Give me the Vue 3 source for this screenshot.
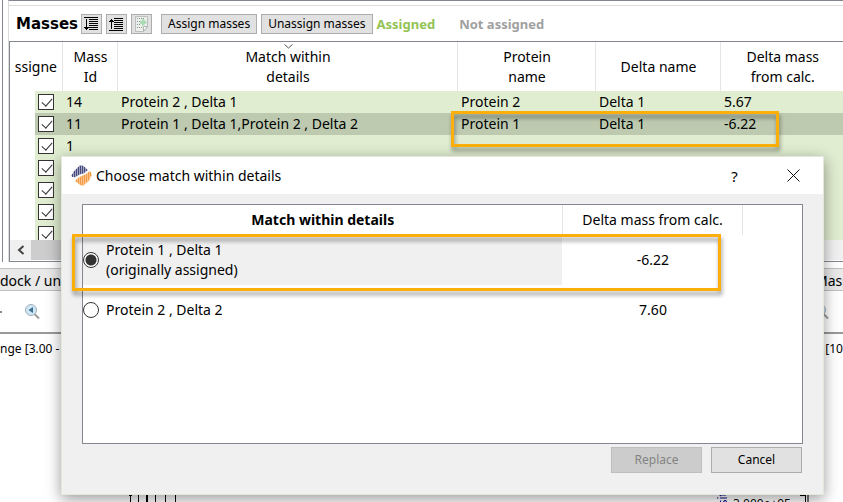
<script setup>
import { ref } from 'vue'

const rows = ref([
  { id: '14', match: 'Protein 2 , Delta 1', protein: 'Protein 2', delta: 'Delta 1', mass: '5.67', on: true },
  { id: '11', match: 'Protein 1 , Delta 1,Protein 2 , Delta 2', protein: 'Protein 1', delta: 'Delta 1', mass: '-6.22', on: true, selected: true },
  { id: '1', on: true },
  { id: '', on: true },
  { id: '', on: true },
  { id: '', on: true },
  { id: '', on: true },
])
const choice = ref('a')
</script>

<template>
  <div class="app">
    <div class="top">
      <div class="side"></div>
      <section class="panel">
        <header class="toolbar">
          <h1>Masses</h1>
          <button class="tool" aria-label="Sort descending">
            <svg width="19" height="18" viewBox="0 0 19 18" fill="none" stroke="#000" shape-rendering="crispEdges">
              <path d="M2 2.500h14M7 4.500h9M7 6.500h9M7 8.500h9M7 10.500h9M7 12.500h9M7 14.500h9M4.500 4v11" />
              <path d="M2 12.500h5M3 13.500h3M4 14.500h1" />
            </svg>
          </button>
          <button class="tool" aria-label="Sort ascending">
            <svg width="19" height="18" viewBox="0 0 19 18" fill="none" stroke="#000" shape-rendering="crispEdges">
              <path d="M2 15.500h14M7 13.500h9M7 11.500h9M7 9.500h9M7 7.500h9M7 5.500h9M7 3.500h9M4.500 4v10" />
              <path d="M2 6.500h5M3 5.500h3M4 4.500h1" />
            </svg>
          </button>
          <button class="tool" aria-label="Export table">
            <svg width="19" height="18" viewBox="0 0 19 18">
              <path d="M3.500 1.500h12v10l-4 5h-8z" fill="#eceeec" stroke="#bcc0bc" />
              <path d="M5 3.500h8M5 6.500h3M5 9.500h3M5 12.500h5" stroke="#8a9c8e" stroke-dasharray="1 1" />
              <path d="M8 6h2V3l5 4.500-5 4V9H8z" fill="#a9dcb4" />
              <path d="M15.500 11.500h-4v5z" fill="#fff" stroke="#b0b4b0" />
            </svg>
          </button>
          <button class="btn first">Assign masses</button>
          <button class="btn">Unassign masses</button>
          <span class="legend yes">Assigned</span>
          <span class="legend no">Not assigned</span>
        </header>
        <div class="grid">
          <table class="masses">
            <colgroup><col class="c0" /><col class="c1" /><col class="c2" /><col class="c3" /><col class="c4" /><col class="c5" /></colgroup>
            <thead>
              <tr>
                <th><div class="clip"><span>Assigned</span></div></th>
                <th>Mass<br />Id</th>
                <th class="sorted">
                  <svg class="caret" width="9" height="5" viewBox="0 0 9 5" fill="none" stroke="#555"><path d="M.5.500l4 3.500 4-3.500" /></svg>
                  Match within<br />details
                </th>
                <th>Protein<br />name</th>
                <th>Delta name</th>
                <th>Delta mass<br />from calc.</th>
              </tr>
            </thead>
            <tbody>
              <tr v-for="(r, i) in rows" :key="i" :class="{ selected: r.selected }">
                <td class="pick"><div><input v-model="r.on" type="checkbox" :aria-label="'Assigned, row ' + (i + 1)" /></div></td>
                <td>{{ r.id }}</td>
                <td>{{ r.match }}</td>
                <td>{{ r.protein }}</td>
                <td>{{ r.delta }}</td>
                <td>{{ r.mass }}</td>
              </tr>
            </tbody>
          </table>
          <div class="scroll">
            <button aria-label="Scroll left">
              <svg width="8" height="10" viewBox="0 0 8 10" fill="none" stroke="#444" stroke-width="2"><path d="M6.500 1L2 5l4.500 4" /></svg>
            </button>
            <div class="thumb"></div>
          </div>
        </div>
      </section>
    </div>

    <div class="dock"><span>dock / undock</span><span class="dock-right">Mass</span></div>
    <div class="tools">
      <span class="dot"></span>
      <svg class="lens" width="17" height="17" viewBox="0 0 17 17">
        <path d="M10.500 11l4.500 4.500" stroke="#9a9a9a" stroke-width="2" />
        <circle cx="7" cy="7" r="5.500" fill="#cfe6f5" stroke="#9fb0bd" />
        <path d="M9 4v6L4.500 7z" fill="#3f6c91" />
      </svg>
      <svg class="lens right" width="17" height="17" viewBox="0 0 17 17">
        <path d="M10.500 11l4.500 4.500" stroke="#9a9a9a" stroke-width="2" />
        <circle cx="7" cy="7" r="5.500" fill="#cfe6f5" stroke="#9fb0bd" />
      </svg>
    </div>
    <div class="range"><span>nge [3.00 -</span><span>[10</span></div>
    <div class="plots">
      <svg width="50" height="19" viewBox="0 0 50 19" stroke="#000" shape-rendering="crispEdges">
        <path d="M0 12.500h3M1.500 12v7M9.500 12v7M26.500 12v7M36.500 12v7M46.500 12v7" />
        <path d="M18 12v7" stroke-width="2" />
      </svg>
      <div class="axis">
        <span class="axis-name">Intensity</span>
        <span class="tick">3.000e+05</span>
        <svg width="9" height="19" viewBox="0 0 9 19" shape-rendering="crispEdges">
          <path d="M0 12.500h6M5.500 12v7" stroke="#000" />
          <path d="M7.500 12v7" stroke="#777" stroke-width="2" />
        </svg>
      </div>
    </div>

    <div class="mark mark-row"></div>

    <div class="dialog" role="dialog" aria-labelledby="dialog-title">
      <div class="title">
        <svg width="21" height="21" viewBox="0 0 21 21" fill="none">
          <path d="M0 11l3-5 6-6 3 .5L17 5l-4 3.500-4 1-5 3z" fill="#a3a5c0" />
          <path d="M4 16l4-4 7-3 4-3 2 4-3 6-6 5-3-1z" fill="#fbc48c" />
          <path d="M1.500 9v3M3.500 6v6M5.500 4v7M7.500 2v8M9.500 1v8M11.500 1v7.500M13.500 2v5.500M15.500 4v2" stroke="#454b7c" />
          <path d="M5.500 14.500v2.500M7.500 13v5.500M9.500 12v8M11.500 11v9M13.500 10v8.500M15.500 9v8M17.500 7v8M19.500 7v4" stroke="#f49a42" />
        </svg>
        <h2 id="dialog-title">Choose match within details</h2>
        <button class="win" aria-label="Help">?</button>
        <button class="win" aria-label="Close">
          <svg width="13" height="13" viewBox="0 0 13 13" stroke="#111"><path d="M.5.500l12 12M12.500.500l-12 12" /></svg>
        </button>
      </div>
      <div class="body">
        <div class="list">
          <table class="options">
            <colgroup><col /><col class="o1" /><col class="o2" /></colgroup>
            <thead>
              <tr><th class="bold">Match within details</th><th>Delta mass from calc.</th><th></th></tr>
            </thead>
            <tbody>
              <tr>
                <td class="shade"><label><input v-model="choice" type="radio" name="match" value="a" /><span>Protein 1 , Delta 1<br />(originally assigned)</span></label></td>
                <td class="num">-6.22</td><td></td>
              </tr>
              <tr>
                <td><label><input v-model="choice" type="radio" name="match" value="b" /><span>Protein 2 , Delta 2</span></label></td>
                <td class="num">7.60</td><td></td>
              </tr>
            </tbody>
          </table>
          <div class="mark mark-choice"></div>
        </div>
        <div class="actions">
          <button class="btn" disabled>Replace</button>
          <button class="btn">Cancel</button>
        </div>
      </div>
    </div>
  </div>
</template>

<style>
body { margin: 0; background: #fff; }
</style>

<style scoped>
* { box-sizing: border-box; }
.app { position: relative; height: 100vh; overflow: hidden; display: flex; flex-direction: column; font-family: "Noto Sans", sans-serif; font-size: 14px; line-height: 20px; color: #000; background: #fff; }
button { font-family: inherit; color: #000; }
.top { display: flex; }
.side { width: 3px; height: 262px; border-right: 1px solid #828790; }
.panel { flex: 1; min-width: 0; margin-left: 5px; border-top: 1px solid #828790; border-left: 1px solid #dcdcdc; }
.toolbar { display: flex; align-items: center; height: 36px; margin-top: 4px; padding-left: 7px; border-top: 1px solid #dcdcdc; }
h1 { flex: none; margin: 0 4px 0 0; font: bold 15px/20px "DejaVu Sans", sans-serif; white-space: nowrap; width: 61px; }
.tool { display: flex; align-items: center; justify-content: center; width: 21px; height: 20px; padding: 0; margin-right: 4px; background: #e1e1e1; border: 1px solid #adadad; }
.btn { height: 20px; padding: 0 6px; font-size: 12px; line-height: 16px; background: #e1e1e1; border: 1px solid #adadad; white-space: nowrap; }
.toolbar .btn { margin-right: 4px; }
.toolbar .btn.first { margin-left: 5px; }
.legend { font-weight: bold; font-size: 13px; line-height: 20px; white-space: nowrap; }
.yes { color: #92c353; margin-right: 24px; }
.no { color: #a0a0a0; }
.grid { border-top: 1px solid #828790; border-left: 1px solid #828790; border-bottom: 1px solid #828790; height: 221px; overflow: hidden; display: flex; flex-direction: column; }
.masses { width: 100%; table-layout: fixed; border-collapse: collapse; flex: none; margin-bottom: -5px; }
.c0 { width: 52px; } .c1 { width: 55px; } .c2 { width: 340px; } .c3 { width: 138px; } .c4 { width: 125px; }
th { font-weight: normal; padding: 0; }
.masses th { height: 49px; padding-left: 2px; border-right: 1px solid #e5e5e5; }
.masses th:last-child { border-right: 0; }
.clip { display: flex; justify-content: center; overflow: hidden; margin: 0 5px 0 3px; }
.sorted { position: relative; }
.caret { position: absolute; top: 2px; left: 50%; margin-left: -3px; }
.masses td { height: 22px; padding: 0 0 0 4px; line-height: 22px; background: #e0edd0; white-space: nowrap; }
.masses .selected td { background: #bdcab0; }
.masses .pick, .masses .selected .pick { padding: 0; background: #fff; }
.pick div { display: flex; align-items: center; height: 22px; margin-left: 25px; padding-left: 3px; background: #e0edd0; }
.selected .pick div { background: #bdcab0; }
input { appearance: none; flex: none; margin: 0; width: 16px; height: 16px; background: #fff; border: 1px solid #333; }
input[type="checkbox"] { position: relative; }
input[type="checkbox"]:checked::after { content: ""; position: absolute; left: 5px; top: 1px; width: 5px; height: 9px; border: solid #333; border-width: 0 1px 1px 0; transform: rotate(42deg); }
.scroll { position: relative; flex: none; display: flex; height: 20px; background: #f0f0f0; }
.scroll button { width: 21px; padding: 0; border: 0; background: none; display: flex; align-items: center; justify-content: center; }
.thumb { width: 700px; background: #cdcdcd; }
.dock { display: flex; justify-content: space-between; height: 23px; margin-top: 6px; border: solid #c0c0c0; border-width: 1px 0; background: #e9e9e9; line-height: 24px; }
.dock-right { margin-right: -6px; }
.tools { display: flex; align-items: center; height: 41px; }
.dot { width: 2px; height: 2px; background: #888; }
.lens { margin-left: 22px; }
.lens.right { margin-left: auto; margin-right: 13px; }
.range { display: flex; justify-content: space-between; border-top: 2px solid #999; font-size: 12px; line-height: 29px; height: 31px; }
.plots { flex: none; display: flex; align-items: flex-start; justify-content: space-between; height: 19px; margin: 120px 34px 0 129px; }
.axis { display: flex; align-items: flex-start; }
.axis-name { writing-mode: vertical-rl; transform: rotate(180deg); margin-top: 3px; color: #000080; font-size: 12px; line-height: 12px; }
.tick { font-size: 12px; line-height: 14px; padding: 14px 9px 0 4px; }
.mark { position: absolute; border: 3px solid #fcae0a; filter: drop-shadow(1px 4px 2px rgba(0, 0, 0, 0.4)); }
.mark-row { left: 451px; top: 111px; width: 328px; height: 36px; }
.mark-choice { left: -11px; top: 29px; width: 649px; height: 57px; }
.dialog { position: absolute; left: 61px; right: 19px; top: 156px; height: 339px; display: flex; flex-direction: column; background: #f0f0f0; border: 1px solid #e2e8dc; box-shadow: 0 4px 14px rgba(0, 0, 0, 0.4); }
.title { display: flex; align-items: center; height: 37px; padding-left: 9px; background: #fff; }
h2 { flex: 1; margin: 0 0 0 4px; font-size: 14px; font-weight: normal; line-height: 20px; }
.win { display: flex; align-items: center; justify-content: center; width: 57px; height: 37px; padding: 0; border: 0; background: none; font-size: 15px; }
.win:last-child { width: 60px; }
.body { flex: 1; display: flex; flex-direction: column; padding: 10px 20px 0; }
.list { position: relative; flex: none; height: 240px; background: #fff; border: 1px solid #828790; }
.options { width: 100%; table-layout: fixed; border-collapse: collapse; }
.o1 { width: 180px; } .o2 { width: 60px; }
.options th { height: 30px; padding-left: 1px; border-right: 1px solid #e5e5e5; }
.options th:last-child { border-right: 0; }
.options .bold { font-weight: bold; }
.options td { height: 50px; padding: 0; }
.options .num { padding-left: 2px; text-align: center; }
.shade { background: #f0f0f0; }
label { display: flex; align-items: center; gap: 7px; }
input[type="radio"] { border-radius: 50%; }
input[type="radio"]:checked { background: radial-gradient(circle, #333 5px, #fff 6px); }
.actions { display: flex; justify-content: flex-end; gap: 9px; margin-top: 3px; padding-right: 1px; }
.actions .btn { width: 91px; height: 26px; }
.btn:disabled { background: #ccc; border-color: #bfbfbf; color: #838383; }
</style>
